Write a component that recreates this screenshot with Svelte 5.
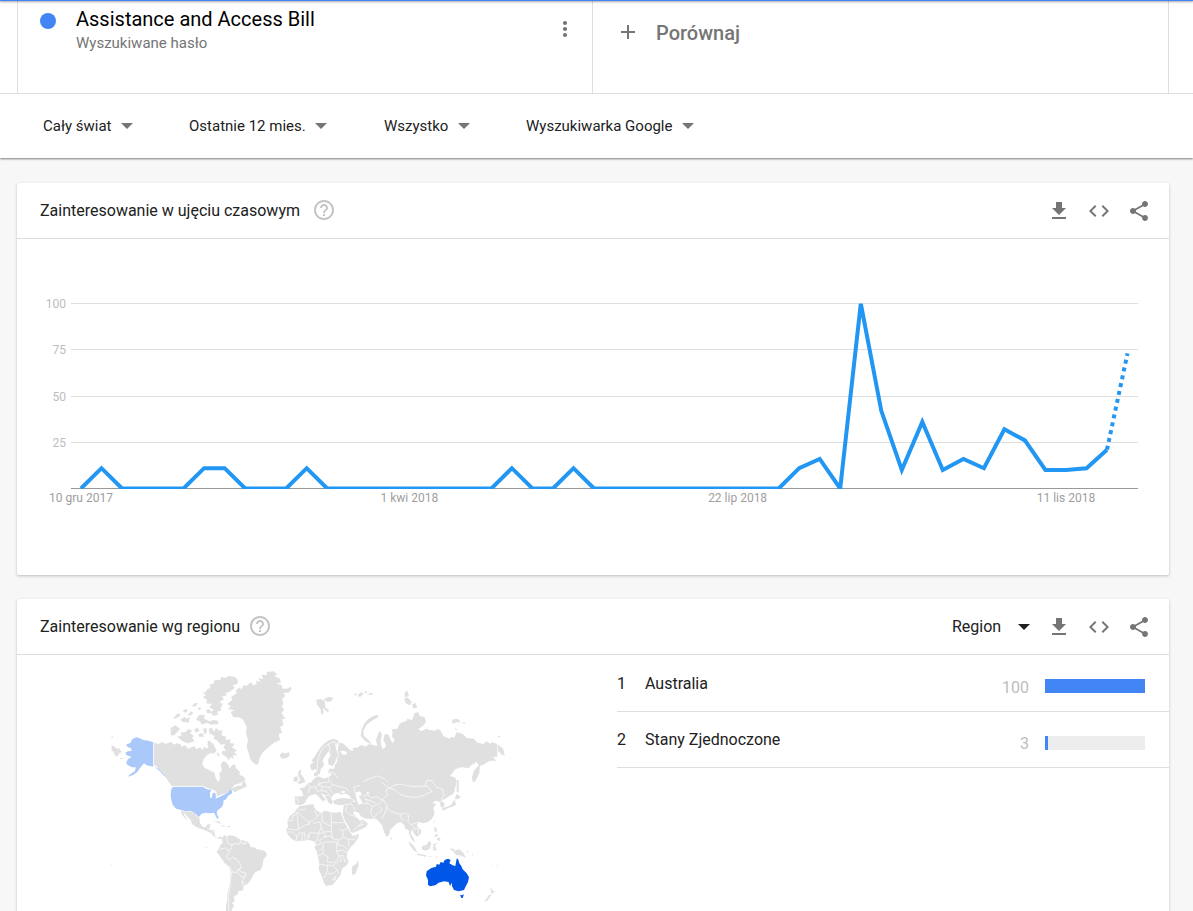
<script>
  const values = [
    0, 11, 0, 0, 0, 0, 11, 11, 0, 0, 0, 11, 0, 0, 0, 0, 0, 0, 0, 0, 0, 11, 0, 0, 11, 0, 0,
    0, 0, 0, 0, 0, 0, 0, 0, 11, 16, 0, 100, 42, 10, 36, 10, 16, 11, 32, 26, 10, 10, 11, 21, 73
  ];
  const px = (i) => 64 + i * 20.52;
  const py = (v) => 249.5 - v * 1.85;
  const pts = values.map((v, i) => `${px(i).toFixed(1)},${py(v).toFixed(1)}`);
  const solid = pts.slice(0, -1).join(' ');
  const dotted = pts.slice(-2).join(' ');
  const grid = [
    { v: 100, y: 64.5 },
    { v: 75, y: 110.5 },
    { v: 50, y: 157.5 },
    { v: 25, y: 203.5 }
  ];
  const dates = [
    { i: 0, label: '10 gru 2017' },
    { i: 16, label: '1 kwi 2018' },
    { i: 32, label: '22 lip 2018' },
    { i: 48, label: '11 lis 2018' }
  ];
  const filters = [
    { name: 'Lokalizacja', value: 'Cały świat' },
    { name: 'Okres', value: 'Ostatnie 12 mies.' },
    { name: 'Kategoria', value: 'Wszystko' },
    { name: 'Rodzaj wyszukiwania', value: 'Wyszukiwarka Google' }
  ];
  const regions = [
    { name: 'Australia', value: 100 },
    { name: 'Stany Zjednoczone', value: 3 }
  ];
</script>

{#snippet help()}
  <button class="help" aria-label="Pomoc">
    <svg width="24" height="24" viewBox="0 0 24 24"><path d="M11 18h2v-2h-2v2zm1-16C6.48 2 2 6.48 2 12s4.48 10 10 10 10-4.48 10-10S17.52 2 12 2zm0 18c-4.41 0-8-3.59-8-8s3.59-8 8-8 8 3.590 8 8-3.590 8-8 8zm0-14c-2.210 0-4 1.790-4 4h2c0-1.100.900-2 2-2s2 .9 2 2c0 2-3 1.750-3 5h2c0-2.250 3-2.500 3-5 0-2.210-1.790-4-4-4z" /></svg>
  </button>
{/snippet}

{#snippet actions()}
  <button class="action" aria-label="Pobierz">
    <svg width="24" height="24" viewBox="0 0 24 24"><path d="M19 9h-4V3H9v6H5l7 7 7-7zM5 18v2h14v-2H5z" /></svg>
  </button>
  <button class="action" aria-label="Umieść">
    <svg width="24" height="24" viewBox="0 0 24 24"><path d="M9.400 16.600L4.800 12l4.600-4.600L8 6l-6 6 6 6 1.400-1.400zm5.200 0l4.600-4.600-4.600-4.600L16 6l6 6-6 6-1.400-1.400z" /></svg>
  </button>
  <button class="action" aria-label="Udostępnij">
    <svg width="24" height="24" viewBox="0 0 24 24"><path d="M18 16.080c-.76 0-1.440.3-1.960.77L8.910 12.700c.05-.23.09-.46.09-.7s-.04-.47-.09-.7l7.050-4.110c.54.5 1.250.81 2.040.81 1.660 0 3-1.340 3-3s-1.340-3-3-3-3 1.340-3 3c0 .24.04.47.09.7L8.040 9.810C7.500 9.310 6.790 9 6 9c-1.660 0-3 1.340-3 3s1.340 3 3 3c.79 0 1.500-.31 2.040-.81l7.120 4.160c-.05.21-.08.43-.08.650 0 1.610 1.310 2.920 2.920 2.920s2.920-1.310 2.920-2.920-1.310-2.920-2.920-2.920z" /></svg>
  </button>
{/snippet}

<div class="topbar"></div>
<header>
  <div class="terms">
    <div class="term">
      <span class="dot"></span>
      <div class="term-text">
        <div class="term-name">Assistance and Access Bill</div>
        <div class="term-kind">Wyszukiwane hasło</div>
      </div>
      <button class="more" aria-label="Więcej opcji">
        <svg width="24" height="24" viewBox="0 0 24 24"><circle cx="12" cy="6" r="2.100" /><circle cx="12" cy="12" r="2.100" /><circle cx="12" cy="18" r="2.100" /></svg>
      </button>
    </div>
    <button class="compare">
      <svg width="24" height="24" viewBox="0 0 24 24"><path d="M19 13h-6v6h-2v-6H5v-2h6V5h2v6h6v2z" /></svg>
      <span>Porównaj</span>
    </button>
  </div>
  <div class="filters">
    {#each filters as f}
      <label class="pick">
        <select aria-label={f.name}><option>{f.value}</option></select>
        <svg width="12" height="6" viewBox="0 0 12 6"><path d="M0 0h12L6 6z" /></svg>
      </label>
    {/each}
  </div>
</header>

<main>
  <section class="card">
    <div class="card-head">
      <h2>Zainteresowanie w ujęciu czasowym</h2>
      {@render help()}
      <div class="tools">{@render actions()}</div>
    </div>
    <svg class="chart" viewBox="0 0 1152 336">
      <defs><clipPath id="plot"><rect x="54" y="64.500" width="1067" height="185.500" /></clipPath></defs>
      {#each grid as g}
        <line x1="54" x2="1121" y1={g.y} y2={g.y} stroke="#dedede" />
        <text class="tick" x="49" y={g.y + 4} text-anchor="end">{g.v}</text>
      {/each}
      <line x1="54" x2="1121" y1="249.500" y2="249.500" stroke="#999" />
      <g clip-path="url(#plot)" fill="none" stroke="#2196f3" stroke-width="4" stroke-miterlimit="10">
        <polyline points={solid} />
        <polyline points={dotted} stroke-dasharray="4 4" />
      </g>
      {#each dates as d}
        <text class="date" x={px(d.i)} y="263" text-anchor="middle">{d.label}</text>
      {/each}
    </svg>
  </section>

  <section class="card region">
    <div class="card-head compact">
      <h2>Zainteresowanie wg regionu</h2>
      {@render help()}
      <div class="tools">
        <label class="pick dark">
          <select aria-label="Podział"><option>Region</option></select>
          <svg width="12" height="6" viewBox="0 0 12 6"><path d="M0 0h12L6 6z" /></svg>
        </label>
        {@render actions()}
      </div>
    </div>
    <div class="geo">
      <svg class="map" viewBox="17 655 600 256">
        <!-- North America, Greenland -->
        <g transform="translate(100 660) scale(.33333)" class="land">
          <path d="M384 148L392 138 382 132 396 120 394 110 410 100 408 90 420 82 424 90 430 76 440 78 452 66 460 76 470 72 468 62 482 66 474 54 490 58 484 44 500 46 500 36 522 34 532 44 522 48 540 56 543 66 530 72 544 74 548 86 560 86 572 80 575 86 566 98 550 98 556 108 546 116 550 130 546 140 553 150 544 158 556 176 546 178 551 194 540 202 547 218 536 222 540 240 522 248 505 262 490 275 480 290 474 314 464 312 452 300 446 280 440 260 444 240 438 220 440 200 430 180 418 172 400 172 392 156 404 150Z" />
          <path d="M320 90L332 82 328 74 342 70 344 60 360 60 364 50 378 54 384 48 404 50 414 60 412 72 398 76 404 84 388 96 378 98 380 106 366 110 372 118 358 126 368 132 362 144 364 152 352 154 354 164 340 168 332 156 342 150 328 142 336 132 318 130 322 120 308 112 318 106 306 96 316 98Z" />
          <path d="M212 204L226 196 240 206 232 216 222 226 212 226ZM232 230L246 226 240 218 256 216 266 206 276 212 270 220 282 228 276 234 284 244 262 250 248 244ZM220 178L228 164 240 160 240 168 230 174ZM240 180L254 170 258 176 270 172 266 188 250 186ZM248 154L258 146 264 152 256 158ZM274 138L288 128 294 130 286 140ZM292 142L304 144 298 152ZM262 166L274 154 280 160 272 166ZM288 180L296 166 314 164 312 176 328 184 340 180 354 182 356 192 334 194 320 188 306 194 300 184ZM282 210L292 202 298 212 290 218ZM294 224L306 218 312 230 298 230ZM310 206L320 204 320 220 312 222ZM318 150L330 148 334 160 322 160Z" />
          <path d="M326 206L336 204 342 216 348 204 358 212 368 210 364 226 378 230 378 240 392 238 390 248 404 252 396 262 412 272 402 276 412 286 398 286 402 296 390 292 388 302 378 290 366 282 366 274 378 272 370 262 376 252 362 254 350 240 340 236 344 228 328 220ZM322 252L338 248 350 272 340 282 328 274ZM350 278L360 282 354 290Z" />
          <path d="M161 247L175 252 188 245 194 252 214 246 222 254 230 250 242 252 244 260 256 256 264 266 284 258 288 268 300 262 308 270 314 258 318 266 326 262 322 244 332 242 334 256 342 270 332 280 322 284 312 296 306 312 314 324 332 332 344 338 346 352 354 366 360 358 358 342 366 330 362 316 368 304 378 306 386 316 388 326 396 316 404 312 408 324 420 336 418 344 432 350 436 360 420 370 404 374 396 384 404 382 410 378 434 376 440 380 424 386 412 392 404 398 400 392 392 388 384 398 372 402 358 406 350 410 350 400 346 392 334 388 322 384 310 379 216 379 206 366 196 350 190 338 178 328 168 318 161 316ZM424 372L434 362 440 378 430 378Z" />
          <path class="pale" d="M160 247L146 242 130 240 118 234 108 232 96 238 92 248 78 254 84 262 92 264 96 272 84 274 76 278 80 286 94 290 84 298 78 308 84 316 96 322 108 322 104 334 92 342 82 350 98 346 112 336 120 324 132 310 140 316 150 318 160 320ZM164 320L176 326 186 336 198 352 190 346 182 336Z" />
          <path d="M35 256L46 262 52 268 56 264 66 276 58 280 52 290 44 284 40 274 35 274ZM34 230h6v4h-6zM60 294h10v3h-10zM538 286L550 276 554 282 566 276 570 286 560 294 546 296Z" />
          <path class="border" d="M160.500 247V318" />
        </g>
        <!-- USA, Central and South America -->
        <g transform="translate(100 780) scale(.33333)" class="land">
          <path class="pale" d="M214 26L220 20H308L320 28 334 30 330 38 330 52 336 54 338 38 346 40 348 50 346 56 356 52 372 44 384 38 390 28 396 32 396 40 384 48 378 58 370 62 370 72 366 80 354 90 350 96 352 106 356 112 352 118 346 106 342 98 328 100 316 98 304 102 296 112 290 104 282 98 274 94 256 94 244 90 228 86 218 74 214 60 212 44Z" />
          <path d="M242 92L256 95 274 96 284 100 292 110 298 114 300 130 308 140 318 142 320 134 332 132 328 148 344 152 344 168 354 174 362 168 368 176 356 176 342 170 334 160 318 152 304 147 288 140 276 132 272 120 262 110 254 100 250 100 264 124 256 116 246 104Z" />
          <path d="M342 124L356 124 366 132 358 130ZM364 134L376 138 370 140ZM378 138L392 138 388 142ZM112 135h3v2h-3zM32 253h3v2h-3zM318 202h4v3h-4z" />
          <path d="M366 174L374 164 380 172 386 166 404 168 412 174 424 180 440 184 448 190 452 202 462 202 470 208 486 210 498 216 500 226 490 240 488 256 482 270 466 276 458 288 450 304 440 314 430 318 430 330 416 334 412 344 402 348 404 362 396 370 402 376 394 394H378L378 374 382 362 382 340 388 320 390 300 392 280 388 260 374 250 366 238 358 226 350 216 356 206 362 194 368 188Z" />
          <path class="border" d="M218 19H310M380 172L384 190 396 194 394 206 384 210 376 204 358 208M396 194L408 190 416 194 424 180M422 184L426 192 440 190M434 184V192M384 210L388 220 378 228 388 240 398 232 412 240 420 250 424 264 414 268 410 278 396 276 390 260M414 268L424 276 436 278 436 288 426 292 414 278M436 288L426 304 428 318M426 304L440 314M396 276L392 296 390 320 386 344 386 394M322 146L332 150M334 156L344 156" />
        </g>
        <!-- Northern Eurasia -->
        <g transform="translate(290 660) scale(.33333)" class="land">
          <path class="plain" d="M146 248L158 250 172 262 180 270 172 276 158 272 150 274 158 284 168 284 174 270 190 272 188 264 204 262 214 254 226 260 238 252 250 256 262 258 258 240 264 222 270 212 276 224 272 244 276 266 284 264 288 256 280 240 284 222 296 224 302 240 308 250 314 240 306 230 308 216 304 208 322 206 330 190 350 182 352 176 366 180 374 160 384 156 390 168 404 172 408 186 398 198 386 206 392 214 410 206 420 210 436 212 442 206 452 212 460 228 478 236 486 230 492 234 500 216 518 222 530 234 552 236 562 248 580 252 590 244 602 252 606 246 622 252 622 290 608 292 620 302 600 302 580 314 570 318 568 338 556 364 548 366 546 350 552 332 566 316 560 306 544 316 536 324 512 322 496 328 480 348 494 352 500 362 496 382H66L66 364 74 354 84 350 90 350 100 356 118 350 126 342 114 338 118 326 134 326 134 316 142 304 142 286Z" />
          <path d="M62 312L72 308 64 302 74 290 80 280 90 264 104 250 114 242 130 236 142 240 148 248 140 250 138 262 144 284 138 302 128 318 116 314 114 300 122 286 116 272 108 284 98 300 102 316 92 328 90 342 82 344 78 326 66 332 60 320ZM72 340L80 336 84 350 72 348Z" />
          <path class="border" d="M82 332L82 308 88 284 100 262 116 252 122 274M116 252L134 244L138 262L146 284L136 304M194 390L200 376 224 380 222 364 244 354 262 348 284 356 294 366M114 350L118 364 134 374M118 336L134 340 142 354" />
          <path d="M26 332L34 330 32 342 40 352 46 366 30 372 22 370 30 360 24 344ZM12 352L22 348 24 358 20 366 10 364ZM78 120L94 116 96 122 104 118 106 142 118 152 112 156 100 144 100 160 94 164 92 148 82 136ZM102 116L118 110 130 114 124 124 112 126ZM190 104L198 100 202 106 194 106ZM204 104L214 96 220 102 212 110 206 110ZM222 98L230 92 232 100ZM234 102L246 98 250 102 240 106ZM264 164L250 168 234 178 222 192 214 212 212 228 224 242 246 254 236 240 222 228 220 212 230 194 246 182 264 172ZM344 98L352 92 357 108 344 112ZM342 118L352 112 366 126 360 136 350 132ZM366 134L376 128 382 142 370 146ZM486 180L496 176 506 178 512 188 500 186 488 192ZM516 186L528 189 522 192ZM494 206L506 208 496 210ZM624 254L640 266 644 288 636 284 624 272ZM624 228h6v4h-6z" />
        </g>
        <!-- Southern Eurasia, Africa, Oceania -->
        <g transform="translate(280 780) scale(.33333)" class="land">
          <path class="plain" d="M96 6H526L524 32 520 42 504 50 494 58 484 60 494 72 490 84 482 80 480 66 468 62 456 70 468 72 460 84 464 100 456 116 444 126 430 130 416 126 410 138 424 150 422 162 410 170 402 160 394 150 392 162 400 174 406 188 396 180 388 164 386 150 376 146 372 134 362 126 352 130 340 140 330 150 328 164 320 172 312 156 306 136 298 126 290 118 276 116 258 116 244 110 236 98 226 94 218 98 230 112 240 122 250 118 264 132 256 142 240 150 220 158 212 156 208 144 196 124 188 104 190 84 192 74 180 76 164 72 158 64 172 56 190 54 210 56 210 48 196 40 184 44 176 38 162 42 152 54 158 64 154 74 146 68 140 56 132 44 122 38 130 50 140 62 130 60 130 70 122 56 108 42 98 44 88 48 80 58 74 70 60 76 46 72 44 50 70 48 66 34 58 26 74 22 84 10Z" />
          <path fill="#fff" d="M226 38L240 34 246 44 236 48 242 58 248 70 236 74 230 58ZM258 36L268 38 264 44ZM184 32L196 34 192 40 184 38Z" />
          <path class="border" d="M82 10L90 22 84 40M90 22L106 20 112 34 124 32 128 20 116 14 118 4M124 32L140 34 152 50M128 20L148 22 158 14 152 4M148 22L156 38M158 14L170 18 188 22 200 26 204 34M132 44L148 48M46 56L54 56 54 70M106 20L126 8 148 6M196 52L216 56 226 66M192 74L212 72 220 80 224 92M202 74L196 92 212 104 232 112M210 72L218 64 228 64M220 152L236 138 252 132M236 138L252 120M226 40L222 22 240 16M304 4L318 18 330 24M318 30L322 46 306 60 290 50 274 54 262 44 248 50M248 70L266 70 276 80 300 70 310 60M266 70L254 56 270 62 288 70M276 80L272 100 282 116M300 78L306 92 290 102 282 116M310 60L322 78 316 96 306 116M318 80L330 92 352 102 364 102 376 98 386 106 384 124 392 134 404 130 416 126M364 102L362 114 372 122M318 30L330 24 342 16 360 12 378 16 402 20 424 18 444 20 456 34 432 46 410 52 380 50 358 42 344 30 330 24M434 18L440 2 456 2 468 20 488 28 492 46 484 60M396 134L404 146 416 146 414 160M404 146L398 154M480 66L488 62" />
          <path d="M60 78L76 76 100 72 104 84 110 92 124 98 134 92 150 96 166 98 182 96 186 108 194 128 204 146 214 162 218 168 236 162 236 172 224 190 210 204 202 216 200 230 206 244 200 256 186 266 182 284 170 300 158 314 138 318 132 308 126 290 116 268 118 252 114 230 110 214 104 204 108 192 100 184 88 180 70 182 50 184 36 178 24 164 18 152 24 140 22 124 30 108 42 98 50 88Z" />
          <path class="border" d="M42 98L56 98M56 90L78 88M22 122L36 122 38 108 56 100 86 126 98 122 112 110 104 92M24 146L42 150 56 148 52 106M56 148L64 142 76 134 90 132 86 126M112 110L126 94M126 90V124L154 140 154 94M154 128H194M98 130L120 126 124 142 116 160 90 158 86 176M20 156L38 156 50 170 56 160 74 158 76 182M48 184L50 170M66 182V160M84 160V182M116 160L112 176 104 190M124 142L130 156 154 154 154 140M116 160L130 158 138 170 118 180 126 190 108 196M130 170L152 168 158 176 176 180 190 170 188 152 202 146M154 154L158 176M188 152L180 148M190 170L206 178 222 178 232 168M176 180L172 194 190 198 202 208M206 178L206 200M132 186L170 186 170 214 176 228 190 226M132 186L128 204 116 212M128 204L130 222 144 230 142 246 160 248 176 236 176 228M114 226L130 222M116 252L142 256 142 270 136 290 128 290M142 256L160 256 170 248 184 242 182 228M142 282L160 280 172 270 160 258M172 270L178 282M190 226L194 246 202 236M160 294L168 290 166 300 158 300ZM170 214L188 210 202 220" />
          <path d="M216 260L228 252 234 240 236 256 226 282 216 284ZM330 170L337 175 333 180ZM384 184L396 192 408 208 412 218 400 210 390 196ZM412 220L438 226 438 230 412 225ZM426 198L438 196 448 182 454 190 448 208 436 212 426 208ZM460 192L474 188 464 196 470 210 460 212ZM444 228L458 230 450 232ZM464 232L476 228 468 234ZM508 206L522 206 524 212 538 208 550 218 558 234 540 226 528 226 520 214ZM560 212L566 216 560 218ZM462 142L470 144 470 156 464 156ZM470 160L474 168 462 172ZM474 172L482 176 478 184 470 178ZM460 122L464 124 462 130ZM530 0H536L536 38 530 34ZM530 42L542 50 534 58 524 56ZM524 58L528 74 518 80 504 84 490 92 484 86 500 80 512 76ZM582 -2h3v8h-3zM630 320L638 332 646 334 634 342ZM628 344L634 346 622 362 612 366ZM634 254h4v2h-4zM650 256h3v3h-3zM576 222h3v4h-3z" />
          <path fill="#0057e7" d="M440 274L454 264 468 260 470 252 478 254 482 246 490 248 494 240 504 236 512 240 508 250 518 256 526 258 530 236 534 236 538 250 544 258 548 268 560 280 567 292 564 306 556 322 552 330 536 334 522 330 516 318 516 308 510 318 506 306 492 304 476 308 466 316 450 319 444 314 444 300 438 286ZM540 344L546 346 552 343 548 354H544Z" />
        </g>
      </svg>
      <ol>
        {#each regions as r, i}
          <li>
            <span class="rank">{i + 1}</span>
            <span class="name">{r.name}</span>
            <span class="value">{r.value}</span>
            <span class="bar"><span class="fill" style="width:{r.value}%"></span></span>
          </li>
        {/each}
      </ol>
    </div>
  </section>
</main>

<style>
  :global(body) {
    background: #f7f7f7;
    font-family: Roboto, sans-serif;
    color: #212121;
  }
  button,
  select {
    font: inherit;
    color: inherit;
    border: 0;
    padding: 0;
    margin: 0;
    background: none;
    cursor: pointer;
  }
  svg {
    display: block;
    flex: none;
    fill: currentColor;
  }
  .topbar {
    position: absolute;
    top: 0;
    left: 0;
    right: 0;
    height: 1px;
    background: #4285f4;
    box-shadow: 0 1px 2px rgba(0, 0, 0, 0.5);
  }
  header {
    background: #fff;
    box-shadow: 0 1px 2px rgba(0, 0, 0, 0.5);
  }
  .terms {
    display: grid;
    grid-template-columns: 1fr 1fr;
    height: 93px;
    padding: 0 24px 0 17px;
    border-bottom: 1px solid #dedede;
  }
  .term {
    display: flex;
    align-items: flex-start;
    border-left: 1px solid #dedede;
    padding: 7px 16px 0 22px;
  }
  .dot {
    width: 16px;
    height: 16px;
    margin-top: 6px;
    border-radius: 50%;
    background: #4285f4;
  }
  .term-text {
    flex: 1;
    margin-left: 20px;
  }
  .term-name {
    font-size: 20px;
    line-height: 24px;
    color: #000;
  }
  .term-kind {
    font-size: 15px;
    line-height: 24px;
    color: #757575;
  }
  .more {
    margin-top: 10px;
    color: #757575;
  }
  .compare {
    display: flex;
    align-items: flex-start;
    gap: 16px;
    margin-left: -1px;
    padding: 20px 0 0 23px;
    border: solid #dedede;
    border-width: 0 1px;
    color: #757575;
    font-size: 20px;
    font-weight: 500;
    line-height: 26px;
    text-align: left;
  }
  .filters {
    display: grid;
    grid-template-columns: 146px 195px 142px auto;
    align-items: center;
    height: 64px;
    padding-left: 43px;
    font-size: 15px;
  }
  .pick {
    display: flex;
    align-items: center;
    gap: 9px;
  }
  .pick select {
    appearance: none;
    line-height: 24px;
  }
  .pick svg {
    color: #757575;
  }
  .dark {
    gap: 16px;
    margin-right: 9px;
    font-size: 16px;
  }
  .dark svg {
    color: #212121;
  }
  main {
    display: grid;
    gap: 24px;
    padding: 25px 24px 0 17px;
  }
  .card {
    background: #fff;
    border-radius: 2px;
    box-shadow: 0 1px 3px rgba(0, 0, 0, 0.24);
    min-width: 0;
  }
  .region {
    border-radius: 2px 2px 0 0;
  }
  .card-head {
    display: flex;
    align-items: center;
    height: 55px;
    padding: 0 10px 0 23px;
    border-bottom: 1px solid #dedede;
  }
  h2 {
    margin: 0;
    font-size: 16px;
    font-weight: 400;
  }
  .help {
    margin: 0 0 2px 12px;
    color: #c4c4c4;
  }
  .compact .help {
    margin-left: 8px;
  }
  .tools {
    display: flex;
    align-items: center;
    margin-left: auto;
  }
  .action {
    display: grid;
    place-items: center;
    width: 40px;
    height: 40px;
    color: #757575;
  }
  .chart,
  .map {
    width: 100%;
    height: auto;
  }
  .tick,
  .date {
    font-size: 12px;
  }
  .tick {
    fill: #bdbdbd;
  }
  .date {
    fill: #9e9e9e;
  }
  .geo {
    display: grid;
    grid-template-columns: 600fr 552fr;
  }
  .land {
    fill: #e0e0e0;
    stroke: none;
  }
  .pale {
    fill: #abc8fa;
  }
  .border {
    fill: none;
    stroke: #fff;
    stroke-width: 2;
    stroke-linejoin: round;
  }
  ol {
    list-style: none;
    margin: 0;
    padding: 0;
  }
  li {
    display: flex;
    align-items: center;
    height: 56px;
    padding-right: 24px;
    border-bottom: 1px solid #dedede;
    box-sizing: border-box;
    font-size: 16px;
  }
  li:first-child {
    height: 57px;
  }
  .rank {
    width: 28px;
  }
  .name {
    flex: 1;
  }
  .value {
    margin: 8px 16px 0 0;
    color: #bdbdbd;
  }
  .bar {
    width: 100px;
    height: 14px;
    margin-top: 6px;
    background: #ededed;
  }
  .fill {
    display: block;
    height: 100%;
    background: #4285f4;
  }
</style>
